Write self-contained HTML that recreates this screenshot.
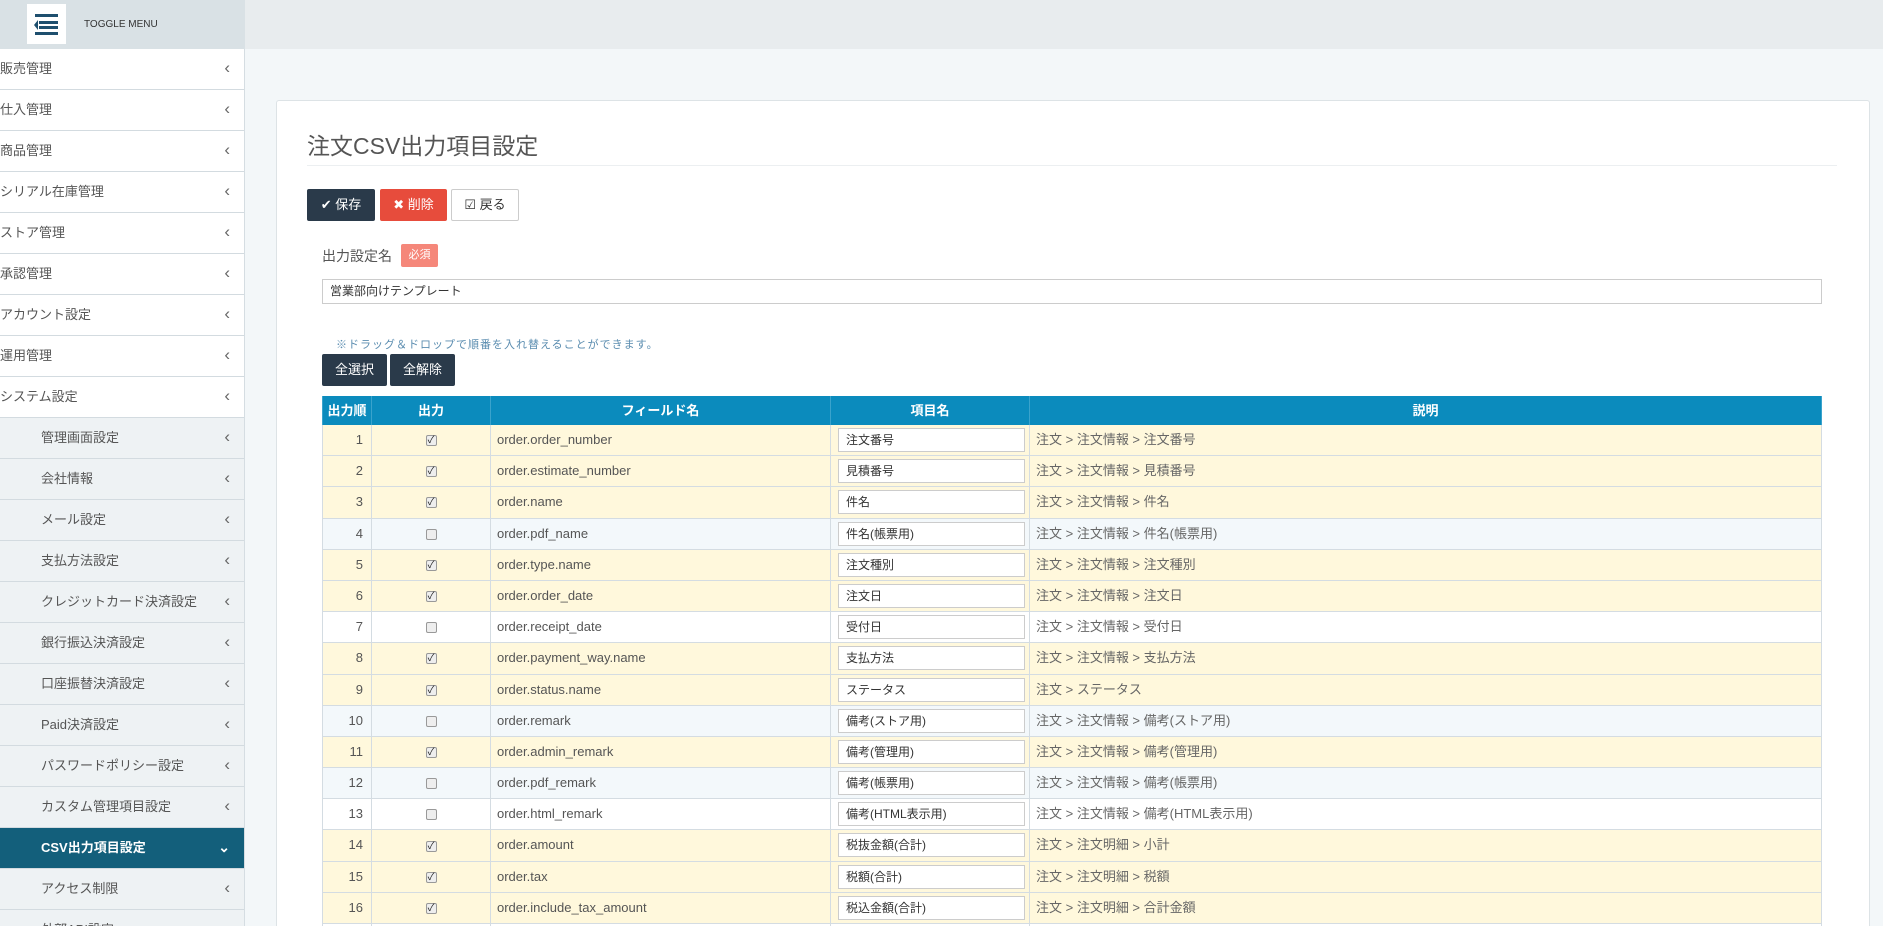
<!DOCTYPE html>
<html style="width:1883px;height:926px;overflow:hidden"><head><meta charset="utf-8"><style>
*{box-sizing:border-box;margin:0;padding:0}
body{width:1883px;height:926px;overflow:hidden;background:#f3f7f9;font-family:"Liberation Sans","Noto Sans CJK JP",sans-serif;color:#555}
#wrap{position:relative;width:1883px;height:926px;overflow:hidden}
.top{position:absolute;left:0;top:0;width:1883px;height:49px;background:#e8ecee}
.tl{position:absolute;left:0;top:0;width:245px;height:49px;background:#d9e1e5}
.ico{position:absolute;left:27px;top:4px;width:39px;height:40px;background:#fff}
.tm{position:absolute;left:84px;top:19px;font-size:10px;color:#333}
.side{position:absolute;left:0;top:49px;width:245px;height:877px;background:#fff;border-right:1px solid #d5dde2;overflow:hidden}
.it{height:41px;border-bottom:1px solid #d3dbe0;font-size:13px;line-height:40px;position:relative;color:#555}
.it span{position:absolute;left:0}
.it.s{background:#eef2f4}
.it.s span{left:41px}
.it i{position:absolute;right:14px;top:-1px;font-style:normal;font-size:17px;color:#666}
.it.a{background:#135f7b;color:#fff;font-weight:bold}
.it.a i{color:#fff;font-size:14px}
.card{position:absolute;left:276px;top:100px;width:1594px;height:900px;background:#fff;border:1px solid #dde3e6;border-radius:3px}
h1{position:absolute;left:307px;top:127px;font-size:23px;font-weight:normal;color:#555}
.hr{position:absolute;left:307px;top:165px;width:1530px;border-top:1px solid #eceff1}
.btn{position:absolute;top:189px;height:32px;font-size:13px;line-height:32px;text-align:center;border-radius:2px;color:#fff}
.lab{position:absolute;left:322px;top:246px;font-size:14px;color:#555}
.badge{position:absolute;left:401px;top:244px;width:37px;height:23px;background:#f5877a;color:#fff;font-size:11px;line-height:23px;text-align:center;border-radius:2px}
.inp{position:absolute;left:322px;top:279px;width:1500px;height:25px;border:1px solid #ccc;font-size:12px;line-height:23px;padding-left:7px;color:#333}
.note{position:absolute;left:336px;top:336px;font-size:11px;color:#5b8db0;letter-spacing:1px}
.b2{position:absolute;top:354px;height:32px;width:65px;background:#2a3a4a;color:#fff;font-size:13px;line-height:32px;text-align:center;border-radius:2px}
.tbl{position:absolute;left:322px;top:396px;width:1500px}
.row{display:flex;height:31.2px;border-bottom:1px solid #d4dce2;font-size:13px;line-height:30px}
.row>div{border-right:1px solid #d4dce2;position:relative}
.row>div:first-child{border-left:1px solid #d4dce2}
.hd{height:29px;background:#0b8bbd;color:#fff;font-weight:bold;line-height:29px;border:none}
.hd>div{text-align:center;border-color:#3aa3cc!important}
.c1{width:50px;text-align:right;padding-right:8px}
.c2{width:119px;text-align:center}
.c3{width:340px;padding-left:6px}
.c4{width:199px;padding-left:7px}
.c5{flex:1;padding-left:6px;color:#666}
.hd .c1{padding:0;text-align:center}
.box{position:absolute;left:7px;top:3px;width:187px;height:24px;border:1px solid #ccc;background:#fff;font-size:12px;line-height:22px;padding-left:7px;color:#333}
.cb{display:inline-block;width:11px;height:11px;border:1px solid #999;border-radius:2px;background:#eee;vertical-align:middle;font-size:10px;line-height:9px;text-align:center;color:#222}
.y{background:#fff8dc}.l{background:#f3f8fb}.w{background:#fff}
</style></head><body><div id="wrap">
<div class="top"></div><div class="tl"></div>
<div class="ico"><svg width="39" height="40"><rect x="8" y="10" width="23" height="3" fill="#1e4f6e"/><rect x="12" y="17" width="19" height="3" fill="#1e4f6e"/><rect x="12" y="22" width="19" height="3" fill="#1e4f6e"/><rect x="8" y="28" width="23" height="3" fill="#1e4f6e"/><polygon points="11,16 11,26 7,21" fill="#1e4f6e"/></svg></div>
<div class="tm">TOGGLE MENU</div>
<div class="side">
<div class="it"><span>販売管理</span><i>‹</i></div>
<div class="it"><span>仕入管理</span><i>‹</i></div>
<div class="it"><span>商品管理</span><i>‹</i></div>
<div class="it"><span>シリアル在庫管理</span><i>‹</i></div>
<div class="it"><span>ストア管理</span><i>‹</i></div>
<div class="it"><span>承認管理</span><i>‹</i></div>
<div class="it"><span>アカウント設定</span><i>‹</i></div>
<div class="it"><span>運用管理</span><i>‹</i></div>
<div class="it"><span>システム設定</span><i>‹</i></div>
<div class="it s"><span>管理画面設定</span><i>‹</i></div>
<div class="it s"><span>会社情報</span><i>‹</i></div>
<div class="it s"><span>メール設定</span><i>‹</i></div>
<div class="it s"><span>支払方法設定</span><i>‹</i></div>
<div class="it s"><span>クレジットカード決済設定</span><i>‹</i></div>
<div class="it s"><span>銀行振込決済設定</span><i>‹</i></div>
<div class="it s"><span>口座振替決済設定</span><i>‹</i></div>
<div class="it s"><span>Paid決済設定</span><i>‹</i></div>
<div class="it s"><span>パスワードポリシー設定</span><i>‹</i></div>
<div class="it s"><span>カスタム管理項目設定</span><i>‹</i></div>
<div class="it s a"><span>CSV出力項目設定</span><i>⌄</i></div>
<div class="it s"><span>アクセス制限</span><i>‹</i></div>
<div class="it s"><span>外部API設定</span><i>‹</i></div>
</div>
<div class="card"></div>
<h1>注文CSV出力項目設定</h1>
<div class="hr"></div>
<div class="btn" style="left:307px;width:68px;background:#2a3a4a">✔ 保存</div>
<div class="btn" style="left:380px;width:67px;background:#e74c3c">✖ 削除</div>
<div class="btn" style="left:451px;width:68px;background:#fff;color:#333;border:1px solid #ccc;line-height:30px">☑ 戻る</div>
<div class="lab">出力設定名</div><div class="badge">必須</div>
<div class="inp">営業部向けテンプレート</div>
<div class="note">※ドラッグ＆ドロップで順番を入れ替えることができます。</div>
<div class="b2" style="left:322px">全選択</div><div class="b2" style="left:390px">全解除</div>
<div class="tbl">
<div class="row hd"><div class="c1">出力順</div><div class="c2">出力</div><div class="c3" style="padding:0">フィールド名</div><div class="c4" style="padding:0">項目名</div><div class="c5" style="padding:0;color:#fff">説明</div></div>
<div class="row y"><div class="c1">1</div><div class="c2"><span class="cb">✓</span></div><div class="c3">order.order_number</div><div class="c4"><div class="box">注文番号</div></div><div class="c5">注文 &gt; 注文情報 &gt; 注文番号</div></div>
<div class="row y"><div class="c1">2</div><div class="c2"><span class="cb">✓</span></div><div class="c3">order.estimate_number</div><div class="c4"><div class="box">見積番号</div></div><div class="c5">注文 &gt; 注文情報 &gt; 見積番号</div></div>
<div class="row y"><div class="c1">3</div><div class="c2"><span class="cb">✓</span></div><div class="c3">order.name</div><div class="c4"><div class="box">件名</div></div><div class="c5">注文 &gt; 注文情報 &gt; 件名</div></div>
<div class="row l"><div class="c1">4</div><div class="c2"><span class="cb"></span></div><div class="c3">order.pdf_name</div><div class="c4"><div class="box">件名(帳票用)</div></div><div class="c5">注文 &gt; 注文情報 &gt; 件名(帳票用)</div></div>
<div class="row y"><div class="c1">5</div><div class="c2"><span class="cb">✓</span></div><div class="c3">order.type.name</div><div class="c4"><div class="box">注文種別</div></div><div class="c5">注文 &gt; 注文情報 &gt; 注文種別</div></div>
<div class="row y"><div class="c1">6</div><div class="c2"><span class="cb">✓</span></div><div class="c3">order.order_date</div><div class="c4"><div class="box">注文日</div></div><div class="c5">注文 &gt; 注文情報 &gt; 注文日</div></div>
<div class="row w"><div class="c1">7</div><div class="c2"><span class="cb"></span></div><div class="c3">order.receipt_date</div><div class="c4"><div class="box">受付日</div></div><div class="c5">注文 &gt; 注文情報 &gt; 受付日</div></div>
<div class="row y"><div class="c1">8</div><div class="c2"><span class="cb">✓</span></div><div class="c3">order.payment_way.name</div><div class="c4"><div class="box">支払方法</div></div><div class="c5">注文 &gt; 注文情報 &gt; 支払方法</div></div>
<div class="row y"><div class="c1">9</div><div class="c2"><span class="cb">✓</span></div><div class="c3">order.status.name</div><div class="c4"><div class="box">ステータス</div></div><div class="c5">注文 &gt; ステータス</div></div>
<div class="row l"><div class="c1">10</div><div class="c2"><span class="cb"></span></div><div class="c3">order.remark</div><div class="c4"><div class="box">備考(ストア用)</div></div><div class="c5">注文 &gt; 注文情報 &gt; 備考(ストア用)</div></div>
<div class="row y"><div class="c1">11</div><div class="c2"><span class="cb">✓</span></div><div class="c3">order.admin_remark</div><div class="c4"><div class="box">備考(管理用)</div></div><div class="c5">注文 &gt; 注文情報 &gt; 備考(管理用)</div></div>
<div class="row l"><div class="c1">12</div><div class="c2"><span class="cb"></span></div><div class="c3">order.pdf_remark</div><div class="c4"><div class="box">備考(帳票用)</div></div><div class="c5">注文 &gt; 注文情報 &gt; 備考(帳票用)</div></div>
<div class="row w"><div class="c1">13</div><div class="c2"><span class="cb"></span></div><div class="c3">order.html_remark</div><div class="c4"><div class="box">備考(HTML表示用)</div></div><div class="c5">注文 &gt; 注文情報 &gt; 備考(HTML表示用)</div></div>
<div class="row y"><div class="c1">14</div><div class="c2"><span class="cb">✓</span></div><div class="c3">order.amount</div><div class="c4"><div class="box">税抜金額(合計)</div></div><div class="c5">注文 &gt; 注文明細 &gt; 小計</div></div>
<div class="row y"><div class="c1">15</div><div class="c2"><span class="cb">✓</span></div><div class="c3">order.tax</div><div class="c4"><div class="box">税額(合計)</div></div><div class="c5">注文 &gt; 注文明細 &gt; 税額</div></div>
<div class="row y"><div class="c1">16</div><div class="c2"><span class="cb">✓</span></div><div class="c3">order.include_tax_amount</div><div class="c4"><div class="box">税込金額(合計)</div></div><div class="c5">注文 &gt; 注文明細 &gt; 合計金額</div></div>
<div class="row w"><div class="c1">17</div><div class="c2"><span class="cb"></span></div><div class="c3"></div><div class="c4"><div class="box"></div></div><div class="c5"></div></div>
</div>
</div></body></html>
